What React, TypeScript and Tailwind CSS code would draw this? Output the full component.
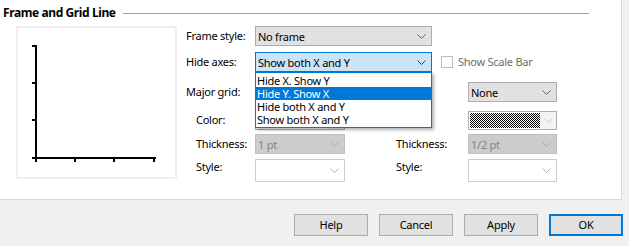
import React from "react";

type Variant = "normal" | "focused" | "disabled" | "empty";

const boxStyles: Record<Variant, string> = {
    normal: "bg-[#e1e1e1] border-[#adadad] text-black",
    focused: "bg-[#cce4f7] border-[#0078d7] text-black",
    disabled: "bg-[#cccccc] border-[#bfbfbf] text-[#838383]",
    empty: "bg-white border-[#cccccc] text-black",
};

const chevronColor: Record<Variant, string> = {
    normal: "#606060",
    focused: "#404040",
    disabled: "#a8a8a8",
    empty: "#b4b4b4",
};

function Chevron({ color }: { color: string }) {
    return (
        <svg width="9" height="5" viewBox="0 0 9 5" className="shrink-0">
            <path d="M0.5 0.5 L4.5 4.5 L8.5 0.5" fill="none" stroke={color} strokeWidth="1" />
        </svg>
    );
}

function Combo({ width, height = "h-[20px]", text, variant = "normal", children }: { width: string; height?: string; text?: string; variant?: Variant; children?: React.ReactNode }) {
    return (
        <div className={`relative ${width} ${height} shrink-0 border flex items-center pl-[2px] pr-[5px] ${boxStyles[variant]}`}>
            <span className="flex-1 leading-none whitespace-nowrap">{text}</span>
            <Chevron color={chevronColor[variant]} />
            {children}
        </div>
    );
}

function ColorBox({ width, pattern }: { width: string; pattern?: boolean }) {
    return (
        <div className={`${width} h-[19px] shrink-0 border border-[#adadad] bg-white flex`}>
            <div className={`flex-1 ${pattern ? "bg-[repeating-conic-gradient(#000_0_25%,#fff_0_50%)] bg-[length:2px_2px] my-[1px] ml-[1px]" : ""}`} />
            <div className="w-[16px] bg-[#f4f4f4] flex items-center justify-center">
                <Chevron color="#c4c4c4" />
            </div>
        </div>
    );
}

function Label({ children, width = "w-[69px]" }: { children?: React.ReactNode; width?: string }) {
    return <div className={`${width} shrink-0 whitespace-nowrap`}>{children}</div>;
}

const items = ["Hide X. Show Y", "Hide Y. Show X", "Hide both X and Y", "Show both X and Y"];

export default function App() {
    return (
        <div className="w-[629px] h-[246px] bg-[#f0f0f0] overflow-hidden flex flex-col font-['Noto_Sans',sans-serif] text-[11px] tracking-[-0.25px] text-black">
            {/* Main panel */}
            <div className="w-[622px] h-[200px] bg-white border-r border-b border-[#d9d9d9] flex flex-col">
                <div className="h-[26px] flex items-center pl-[3px]">
                    <span className="font-bold text-[12px] tracking-[-0.4px] whitespace-nowrap">Frame and Grid Line</span>
                    <div className="ml-[7px] w-[466px] h-px bg-[#a0a0a0]" />
                </div>

                <div className="flex pl-[16px]">
                    {/* Preview */}
                    <div className="w-[161px] h-[153px] border-2 border-[#efefef] shrink-0">
                        <svg width="157" height="149" viewBox="0 0 157 149">
                            <rect x="17" y="17" width="2" height="114" fill="#000" />
                            <rect x="17" y="129" width="121" height="2" fill="#000" />
                            {[17, 54, 91, 129].map((y) => (
                                <rect key={y} x="14" y={y} width="3" height="2" fill="#000" />
                            ))}
                            {[17, 56, 95, 135].map((x) => (
                                <rect key={x} x={x} y="131" width="2" height="3" fill="#000" />
                            ))}
                        </svg>
                    </div>

                    {/* Form */}
                    <div className="ml-[9px] flex flex-col">
                        <div className="flex items-center h-[20px]">
                            <Label>Frame style:</Label>
                            <Combo width="w-[177px]" text="No frame" />
                        </div>

                        <div className="flex items-center h-[20px] mt-[6px]">
                            <Label>Hide axes:</Label>
                            <Combo width="w-[177px]" text="Show both X and Y" variant="focused">
                                <div className="absolute z-10 left-[-1px] top-[19px] w-[177px] bg-white border border-[#0078d7] py-[1px] shadow-[2px_2px_3px_rgba(0,0,0,0.3)]">
                                    {items.map((t, i) => (
                                        <div key={t} className={`h-[13px] leading-[13px] pl-[1px] whitespace-nowrap overflow-hidden ${i === 1 ? "bg-[#0078d7] text-white" : "text-black"}`}>
                                            {t}
                                        </div>
                                    ))}
                                </div>
                            </Combo>
                            <div className="ml-[9px] w-[12px] h-[12px] border border-[#bcbcbc] bg-white shrink-0" />
                            <span className="ml-[5px] text-[#6d6d6d] whitespace-nowrap">Show Scale Bar</span>
                        </div>

                        <div className="flex items-center h-[20px] mt-[10px]">
                            <Label>Major grid:</Label>
                            <Combo width="w-[90px]" />
                            <Label width="w-[72px] ml-[51px]" />
                            <Combo width="w-[89px]" text="None" />
                        </div>

                        <div className="flex items-center h-[19px] mt-[9px] pl-[10px]">
                            <Label width="w-[59px]">Color:</Label>
                            <ColorBox width="w-[90px]" />
                            <Label width="w-[72px] ml-[51px]" />
                            <ColorBox width="w-[89px]" pattern />
                        </div>

                        <div className="flex items-center h-[20px] mt-[4px] pl-[10px]">
                            <Label width="w-[59px]">Thickness:</Label>
                            <Combo width="w-[90px]" text="1 pt" variant="disabled" />
                            <Label width="w-[72px] ml-[51px]">Thickness:</Label>
                            <Combo width="w-[89px]" text="1/2 pt" variant="disabled" />
                        </div>

                        <div className="flex items-start h-[23px] mt-[5px] pl-[10px]">
                            <div className="w-[59px] shrink-0 leading-[16px]">Style:</div>
                            <Combo width="w-[90px]" height="h-[23px]" variant="empty" />
                            <div className="w-[72px] ml-[51px] shrink-0 leading-[16px]">Style:</div>
                            <Combo width="w-[89px]" height="h-[23px]" variant="empty" />
                        </div>
                    </div>
                </div>
            </div>

            {/* Buttons */}
            <div className="flex-1 flex justify-end items-start pt-[14px] pr-[6px] gap-[11px]">
                {["Help", "Cancel", "Apply", "OK"].map((b) => (
                    <button
                        key={b}
                        className={`w-[74px] h-[22px] bg-[#e1e1e1] flex items-center justify-center ${b === "OK" ? "border-2 border-[#0078d7]" : "border border-[#adadad]"}`}
                    >
                        {b}
                    </button>
                ))}
            </div>
        </div>
    );
}
